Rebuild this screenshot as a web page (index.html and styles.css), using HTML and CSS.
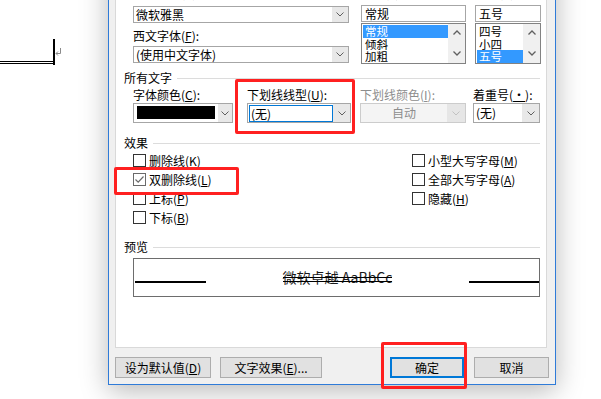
FILE: index.html
```html
<!DOCTYPE html>
<html lang="zh-CN">
<head>
    <meta charset="UTF-8">
    <meta name="viewport" content="width=device-width, initial-scale=1.0">
    <title>字体</title>
    <link rel="stylesheet" href="styles.css">
</head>
<body>
    <!-- document behind the dialog -->
    <div class="doc-rule"></div>
    <div class="doc-bar"></div>
    <svg class="para-mark" width="7" height="8" viewBox="0 0 7 8">
        <path d="M5.5 0 V5.5 H1" fill="none" stroke="#8a8a8a" stroke-width="1"/>
        <path d="M3 3.5 L1 5.5 L3 7.5" fill="none" stroke="#8a8a8a" stroke-width="1"/>
    </svg>

    <div class="dialog">
        <div class="panel">
            <div class="font-grid">
                <div class="col col-name">
                    <div class="label">中文字体(<u>T</u>):</div>
                    <div class="combo">
                        <span class="value">微软雅黑</span>
                        <span class="arrow"><svg width="8" height="5" viewBox="0 0 8 5"><path d="M0.5 0.5 L4 4 L7.5 0.5" fill="none" stroke="#5f5f5f"/></svg></span>
                    </div>
                    <div class="label label-next">西文字体(<u>F</u>):</div>
                    <div class="combo combo-next">
                        <span class="value">(使用中文字体)</span>
                        <span class="arrow"><svg width="8" height="5" viewBox="0 0 8 5"><path d="M0.5 0.5 L4 4 L7.5 0.5" fill="none" stroke="#5f5f5f"/></svg></span>
                    </div>
                </div>
                <div class="col col-style">
                    <div class="label">字形(<u>Y</u>):</div>
                    <div class="edit">常规</div>
                    <div class="listbox">
                        <ul class="items">
                            <li class="sel">常规</li>
                            <li>倾斜</li>
                            <li>加粗</li>
                        </ul>
                        <div class="scroll">
                            <svg width="8" height="5" viewBox="0 0 8 5"><path d="M0.5 4.5 L4 1 L7.5 4.5" fill="none" stroke="#606060" stroke-width="1.3"/></svg>
                            <svg width="8" height="5" viewBox="0 0 8 5"><path d="M0.5 0.5 L4 4 L7.5 0.5" fill="none" stroke="#606060" stroke-width="1.3"/></svg>
                        </div>
                    </div>
                </div>
                <div class="col col-size">
                    <div class="label">字号(<u>S</u>):</div>
                    <div class="edit">五号</div>
                    <div class="listbox">
                        <ul class="items">
                            <li>四号</li>
                            <li>小四</li>
                            <li class="sel">五号</li>
                        </ul>
                        <div class="scroll">
                            <svg width="8" height="5" viewBox="0 0 8 5"><path d="M0.5 4.5 L4 1 L7.5 4.5" fill="none" stroke="#606060" stroke-width="1.3"/></svg>
                            <svg width="8" height="5" viewBox="0 0 8 5"><path d="M0.5 0.5 L4 4 L7.5 0.5" fill="none" stroke="#606060" stroke-width="1.3"/></svg>
                        </div>
                    </div>
                </div>
            </div>

            <div class="group group-all">所有文字</div>
            <div class="attr-row">
                <div class="attr attr-color">
                    <div class="label">字体颜色(<u>C</u>):</div>
                    <div class="select">
                        <span class="swatch"></span>
                        <span class="arrow"><svg width="8" height="5" viewBox="0 0 8 5"><path d="M0.5 0.5 L4 4 L7.5 0.5" fill="none" stroke="#5f5f5f"/></svg></span>
                    </div>
                </div>
                <div class="attr attr-underline">
                    <div class="label">下划线线型(<u>U</u>):</div>
                    <div class="select">
                        <span class="focus">(无)</span>
                        <span class="arrow"><svg width="8" height="5" viewBox="0 0 8 5"><path d="M0.5 0.5 L4 4 L7.5 0.5" fill="none" stroke="#5f5f5f"/></svg></span>
                    </div>
                </div>
                <div class="attr attr-ucolor">
                    <div class="label disabled">下划线颜色(<u>I</u>):</div>
                    <div class="select select-disabled">
                        <span class="value">自动</span>
                        <span class="arrow"><svg width="8" height="5" viewBox="0 0 8 5"><path d="M0.5 0.5 L4 4 L7.5 0.5" fill="none" stroke="#c2c2c2"/></svg></span>
                    </div>
                </div>
                <div class="attr attr-emph">
                    <div class="label">着重号(<u>·</u>):</div>
                    <div class="select">
                        <span class="value">(无)</span>
                        <span class="arrow"><svg width="8" height="5" viewBox="0 0 8 5"><path d="M0.5 0.5 L4 4 L7.5 0.5" fill="none" stroke="#5f5f5f"/></svg></span>
                    </div>
                </div>
            </div>

            <div class="group group-effects">效果</div>
            <div class="effects">
                <div class="effects-col effects-left">
                    <div class="check"><span class="box"></span>删除线(<u>K</u>)</div>
                    <div class="check"><span class="box checked"><svg width="11" height="11" viewBox="0 0 11 11"><path d="M1.5 5.5 L4.2 8.2 L9.5 2.5" fill="none" stroke="#6a6a6a" stroke-width="1.2"/></svg></span>双删除线(<u>L</u>)</div>
                    <div class="check"><span class="box"></span>上标(<u>P</u>)</div>
                    <div class="check"><span class="box"></span>下标(<u>B</u>)</div>
                </div>
                <div class="effects-col">
                    <div class="check"><span class="box"></span>小型大写字母(<u>M</u>)</div>
                    <div class="check"><span class="box"></span>全部大写字母(<u>A</u>)</div>
                    <div class="check"><span class="box"></span>隐藏(<u>H</u>)</div>
                </div>
            </div>

            <div class="group group-preview">预览</div>
            <div class="preview">
                <span class="rule rule-left"></span>
                <span class="sample">微软卓越 AaBbCc</span>
                <span class="rule rule-right"></span>
            </div>
        </div>

        <div class="buttons">
            <div class="btn btn-default">设为默认值(<u>D</u>)</div>
            <div class="btn btn-effects">文字效果(<u>E</u>)...</div>
            <div class="btn btn-ok">确定</div>
            <div class="btn btn-cancel">取消</div>
        </div>
    </div>

    <!-- red annotation frames -->
    <div class="mark mark-underline"></div>
    <div class="mark mark-double"></div>
    <div class="mark mark-ok"></div>
</body>
</html>
```

FILE: styles.css
```css
* {
    box-sizing: border-box;
}
body {
    margin: 0;
    width: 601px;
    height: 399px;
    overflow: hidden;
    position: relative;
    background: #fff;
    font-family: "Noto Sans CJK SC", "Noto Sans", sans-serif;
    font-size: 12px;
    color: #000;
}
u {
    text-decoration-thickness: 1px;
    text-underline-offset: 1px;
}

/* document */
.doc-rule {
    position: absolute;
    left: 0;
    top: 61px;
    width: 53px;
    height: 3px;
    border-top: 1px solid #000;
    border-bottom: 1px solid #000;
}
.doc-bar {
    position: absolute;
    left: 53px;
    top: 39px;
    width: 2px;
    height: 26px;
    background: #000;
}
.para-mark {
    position: absolute;
    left: 55px;
    top: 48px;
}

/* dialog */
.dialog {
    position: absolute;
    left: 108px;
    top: -36px;
    width: 448px;
    height: 421px;
    padding: 7px 0 0 6px;
    background: #f0f0f0;
    border: 1px solid #2f7bd8;
    box-shadow: 0 6px 26px rgba(0, 0, 0, 0.28);
    display: flex;
    flex-direction: column;
}
.panel {
    width: 432px;
    height: 376px;
    padding-top: 13px;
    background: #fff;
    border: 1px solid #d9d9d9;
}
.label {
    height: 14px;
    line-height: 14px;
    white-space: nowrap;
}
.label.disabled {
    color: #8d8d8d;
}

/* font / style / size */
.font-grid {
    display: flex;
    align-items: flex-start;
    margin-left: 17px;
}
.col-name {
    width: 216px;
}
.col-style {
    width: 105px;
    margin-left: 12px;
}
.col-size {
    width: 66px;
    margin-left: 9px;
}
.combo {
    display: flex;
    height: 17px;
    margin-top: 6px;
    background: #fff;
    border: 1px solid #a6a6a6;
}
.combo .value {
    flex: 1;
    padding-left: 2px;
    line-height: 15px;
}
.label-next {
    margin-top: 6px;
}
.combo-next {
    margin-top: 3px;
}
.arrow {
    width: 16px;
    display: flex;
    align-items: center;
    justify-content: center;
    background: #e8e8e8;
}
.edit {
    height: 17px;
    margin-top: 5px;
    padding-left: 3px;
    line-height: 15px;
    border: 1px solid #a6a6a6;
}
.listbox {
    display: flex;
    height: 41px;
    margin-top: 1px;
    border: 1px solid #828282;
}
.items {
    flex: 1;
    list-style: none;
    margin: 0;
    padding: 1px 0 0 1px;
}
.items li {
    height: 12.5px;
    line-height: 12.5px;
    padding-left: 2px;
    font-size: 11.5px;
}
.items li.sel {
    background: #3399ff;
    color: #fff;
}
.scroll {
    width: 17px;
    padding: 6px 0 7px;
    display: flex;
    flex-direction: column;
    align-items: center;
    justify-content: space-between;
    background: #f0f0f0;
}

/* group headers */
.group {
    display: flex;
    align-items: center;
    height: 14px;
    line-height: 14px;
    margin: 0 6px 0 8px;
}
.group::after {
    content: "";
    flex: 1;
    height: 1px;
    margin-left: 5px;
    background: #dcdcdc;
}
.group-all {
    margin-top: 7px;
}
.group-effects,
.group-preview {
    margin-top: 13px;
}

/* all text */
.attr-row {
    display: flex;
    margin: 3px 0 0 17px;
}
.attr-color {
    width: 100px;
}
.attr-underline {
    width: 104px;
    margin-left: 14px;
}
.attr-ucolor {
    width: 106px;
    margin-left: 9px;
}
.attr-emph {
    width: 67px;
    margin-left: 7px;
}
.select {
    display: flex;
    height: 20px;
    margin-top: 1px;
    background: #fff;
    border: 1px solid #a6a6a6;
}
.select .value {
    flex: 1;
    padding-left: 2px;
    line-height: 18px;
}
.select .arrow {
    width: 17px;
}
.swatch {
    width: 80px;
    height: 13px;
    margin: 2px 3px 0 3px;
    background: #000;
}
.attr-color .arrow {
    width: 14px;
}
.focus {
    width: 84px;
    height: 17px;
    margin: 1px 0 0 1px;
    padding-left: 1px;
    line-height: 15px;
    border: 1px solid #0078d7;
}
.select-disabled {
    background: #f4f4f4;
    border-color: #cccccc;
}
.select-disabled .value {
    text-align: center;
    color: #8d8d8d;
    padding-left: 0;
}
.select-disabled .arrow {
    width: 18px;
    background: #e6e6e6;
}

/* effects */
.effects {
    display: flex;
    margin: 1px 0 0 17px;
}
.effects-left {
    width: 279px;
}
.check {
    display: flex;
    align-items: center;
    height: 19px;
    white-space: nowrap;
}
.box {
    width: 13px;
    height: 13px;
    margin-right: 3px;
    background: #fff;
    border: 1px solid #333;
    display: flex;
    align-items: center;
    justify-content: center;
}
.box.checked {
    border-color: #6a6a6a;
}

/* preview */
.preview {
    display: flex;
    justify-content: space-between;
    align-items: flex-start;
    height: 39px;
    margin: 4px 6px 0 17px;
    border: 1px solid #6d6d6d;
}
.rule {
    height: 2px;
    margin-top: 22px;
    background: #000;
}
.rule-left {
    width: 71px;
    margin-left: 1px;
}
.rule-right {
    width: 70px;
}
.sample {
    position: relative;
    margin-top: 10px;
    font-size: 14px;
    line-height: 16px;
    color: #1a1a1a;
}
.sample::after {
    content: "";
    position: absolute;
    left: 0;
    right: 0;
    top: 8px;
    height: 3px;
    border-top: 1px solid #000;
    border-bottom: 1px solid #000;
}

/* buttons */
.buttons {
    display: flex;
    margin: 9px 6px 0 0;
}
.btn {
    height: 21px;
    line-height: 19px;
    text-align: center;
    white-space: nowrap;
    background: #e1e1e1;
    border: 1px solid #adadad;
}
.btn-default {
    width: 96px;
}
.btn-effects {
    width: 102px;
    margin-left: 9px;
}
.btn-ok {
    width: 74px;
    margin-left: auto;
    line-height: 17px;
    border: 2px solid #0078d7;
}
.btn-cancel {
    width: 75px;
    margin-left: 10px;
}

/* annotations */
.mark {
    position: absolute;
    border: 3px solid #ff2020;
    border-radius: 2px;
}
.mark-underline {
    left: 235px;
    top: 79px;
    width: 120px;
    height: 55px;
}
.mark-double {
    left: 114px;
    top: 167px;
    width: 125px;
    height: 28px;
}
.mark-ok {
    left: 381px;
    top: 342px;
    width: 86px;
    height: 47px;
}
```
